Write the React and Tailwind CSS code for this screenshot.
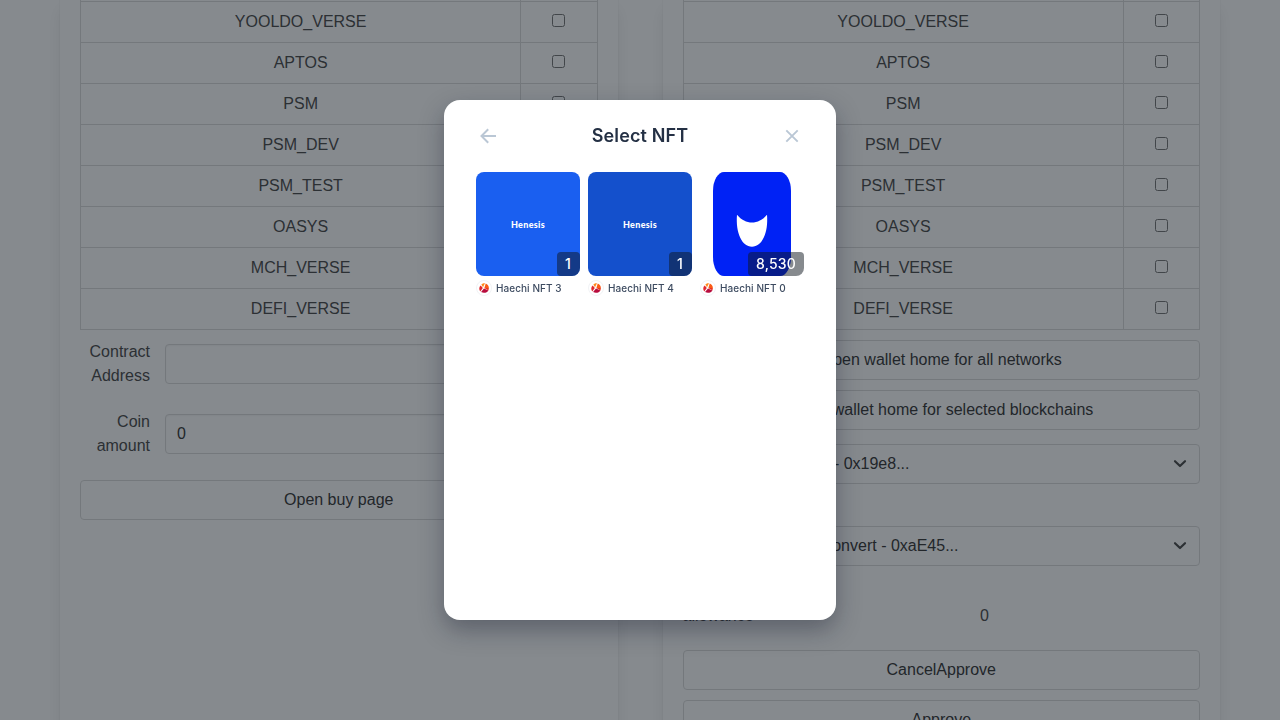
import React from "react";

const NETWORKS = ["BORA", "YOOLDO_VERSE", "APTOS", "PSM", "PSM_DEV", "PSM_TEST", "OASYS", "MCH_VERSE", "DEFI_VERSE"];

function NetworkTable({ cols, boxShift = "" }) {
  return (
    <div className="-mt-10 border-t border-l border-[#dbdbdb]">
      {NETWORKS.map((name) => (
        <div key={name} className={"grid h-[41px] border-b border-[#dbdbdb] " + cols}>
          <div className="border-r border-[#dbdbdb] pl-[0.3px] text-center leading-[40px]">{name}</div>
          <div className={"flex justify-center border-r border-[#dbdbdb] pt-3 " + boxShift}>
            <input type="checkbox" className="m-0 size-[13px]" />
          </div>
        </div>
      ))}
    </div>
  );
}

function Card({ children }) {
  return (
    <section className="h-[800px] w-[557.5px] bg-white px-5 shadow-[0_8px_16px_-2px_rgba(10,10,10,0.1),0_0_0_1px_rgba(10,10,10,0.02)]">
      {children}
    </section>
  );
}

function Button({ children, className = "" }) {
  return (
    <button className={"block h-10 w-full rounded-[4px] border border-[#dbdbdb] bg-white text-center text-[#363636] " + className}>
      {children}
    </button>
  );
}

function Field({ label, value, className }) {
  return (
    <div className={"flex h-12 items-center gap-[15px] " + className}>
      <label className="w-[70px] text-right leading-6">{label}</label>
      <div className="flex h-10 flex-1 items-center rounded-[4px] border border-[#dbdbdb] px-[11px] text-[#363636] shadow-[inset_0_1px_2px_rgba(10,10,10,0.05)]">
        {value}
      </div>
    </div>
  );
}

function Select({ children, width, className }) {
  return (
    <div className={"flex h-10 items-center justify-between rounded-[4px] border border-[#dbdbdb] pr-[12px] pl-[11px] text-[#363636] " + className}>
      <span className={"text-right " + width}>{children}</span>
      <svg width="14" height="10" viewBox="0 0 14 10" fill="none" stroke="#4a4a4a" strokeWidth="2.2" strokeLinecap="round" strokeLinejoin="round">
        <path d="M2 2.2 7 7l5-4.8" />
      </svg>
    </div>
  );
}

function ChainIcon() {
  return (
    <svg width="16" height="16" viewBox="0 0 16 16">
      <circle cx="8" cy="8" r="7.5" fill="#fff" stroke="#f1f3f6" />
      <path d="M5.3 4.6C6.6 3.2 8.2 2.9 9 3.3L7 7.2Z" fill="#ff8a1c" />
      <path d="M9.7 3.4C11.6 4.1 12.8 5.7 12.9 8L8.4 8Z" fill="#fb5a14" />
      <path d="M4.7 5.4 6.8 8 4.3 11.4C2.8 9.3 2.9 7.1 4.7 5.4Z" fill="#e0262c" />
      <path d="M8 8.6 12.4 10.4C11.2 12.6 8 13.6 5.1 12.1Z" fill="#b80c3e" />
      <path d="M8.4 8 12.9 8 12.4 10.4Z" fill="#e8351f" />
    </svg>
  );
}

function NftCard({ name, count, art }) {
  return (
    <div className="w-[104px]">
      <div className="relative flex h-[104px] justify-center overflow-hidden rounded-[8px]">
        {art}
        <span className="absolute right-0 bottom-0 h-6 min-w-[23px] rounded-[4px] bg-[#0d151d]/50 px-2 text-[14px] leading-6 font-medium tracking-[0.2px] text-white">{count}</span>
      </div>
      <div className="mt-1 flex h-4 items-center gap-1 text-[10px] font-medium tracking-[0.06px] whitespace-nowrap text-[#3d4b60]">
        <ChainIcon />
        <span>{name}</span>
      </div>
    </div>
  );
}

function HenesisArt({ color }) {
  return (
    <div className={"flex size-full items-center justify-center pt-px font-[Lato,sans-serif] text-[9px] font-black tracking-[0.3px] text-white " + color}>
      Henesis
    </div>
  );
}

function MaskArt() {
  return (
    <svg width="78" height="104" viewBox="0 0 78 104">
      <rect width="78" height="104" rx="11" ry="19" fill="#0022f5" />
      <path d="M24 42.8C32.5 53.2 45.5 53.2 54 42.8C55.5 61 49 74.8 39 74.8S22.5 61 24 42.8Z" fill="#fff" />
    </svg>
  );
}

function SelectNftModal() {
  return (
    <div className="h-[520px] w-[392px] rounded-2xl bg-white px-8 pt-5 font-[Inter,sans-serif] shadow-[0_10px_24px_rgba(13,21,40,0.35)]">
      <header className="flex h-8 items-center justify-between px-1">
        <svg width="16" height="16" viewBox="0 0 16 16" fill="none" stroke="#bac7d5" strokeWidth="2">
          <path d="M16 8H1.6M8.2 1.3 1.5 8l6.7 6.7" />
        </svg>
        <h1 className="pb-px text-[18px] leading-7 font-semibold tracking-[0.15px] text-[#243044]">Select NFT</h1>
        <svg width="16" height="16" viewBox="0 0 16 16" fill="none" stroke="#bac7d5" strokeWidth="1.9">
          <path d="m2.3 2.3 11.4 11.4M13.7 2.3 2.3 13.7" />
        </svg>
      </header>
      <div className="mt-5 flex gap-2">
        <NftCard name="Haechi NFT 3" count="1" art={<HenesisArt color="bg-[#1a5ff0]" />} />
        <NftCard name="Haechi NFT 4" count="1" art={<HenesisArt color="bg-[#1450cc]" />} />
        <NftCard name="Haechi NFT 0" count="8,530" art={<MaskArt />} />
      </div>
    </div>
  );
}

export default function App() {
  return (
    <div className="h-screen w-[1280px] overflow-hidden bg-white font-['Liberation_Sans',Arial,sans-serif] text-[16px] text-[#4a4a4a]">
      <main className="flex justify-between px-[60px]">
        <Card>
          <NetworkTable cols="grid-cols-[440px_77px]" boxShift="pr-px" />
          <Field className="mt-[10px]" label="Contract Address" value="" />
          <Field className="mt-[22px]" label="Coin amount" value="0" />
          <Button className="mt-[22px]">Open buy page</Button>
        </Card>
        <Card>
          <NetworkTable cols="grid-cols-[440px_76px]" />
          <Button className="mt-[10px]">Open wallet home for all networks</Button>
          <Button className="mt-[10px]">Open wallet home for selected blockchains</Button>
          <Select className="mt-[14px]" width="w-[215px]">- 0x19e8...</Select>
          <Select className="mt-[42px]" width="w-[264px]">Convert - 0xaE45...</Select>
          <div className="mt-[38px] grid h-6 grid-cols-[297.5px_1fr] leading-6">
            <span>allowance</span>
            <span>0</span>
          </div>
          <Button className="mt-[22px]">CancelApprove</Button>
          <Button className="mt-[10px]">Approve</Button>
        </Card>
      </main>
      <div className="fixed inset-0 flex items-center justify-center bg-[#0d151d]/50">
        <SelectNftModal />
      </div>
    </div>
  );
}
